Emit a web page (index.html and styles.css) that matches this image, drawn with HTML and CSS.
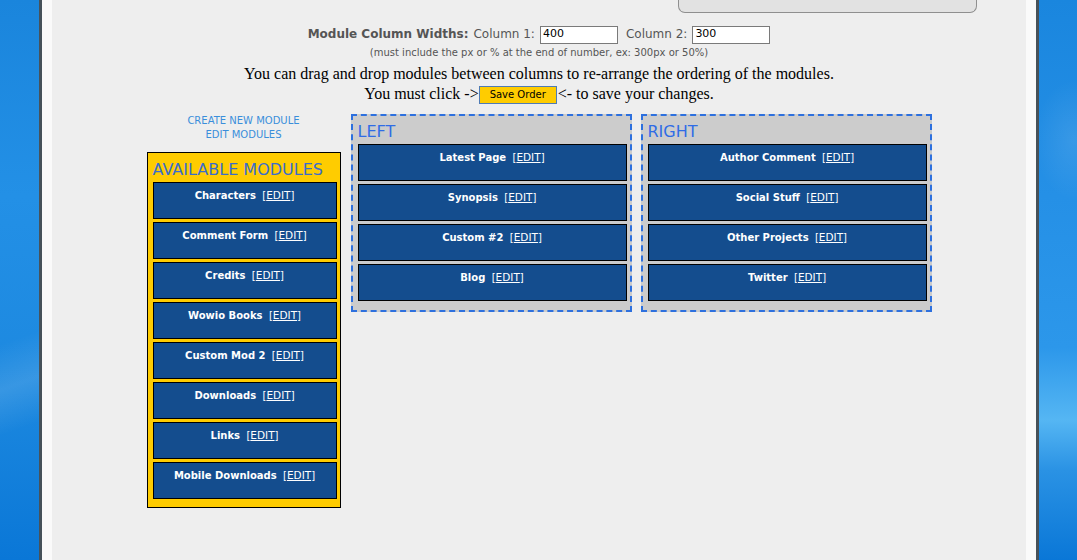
FILE: index.html
```html
<!DOCTYPE html>
<html>
<head>
<meta charset="utf-8">
<title>Modules</title>
<link rel="stylesheet" href="styles.css">
</head>
<body>
<div class="side side-left"></div>
<div class="page">
  <div class="content">
    <div class="topbar"><div class="topbox"></div></div>

    <form class="widths">
      <div class="widths-row">
        <b class="widths-label">Module Column Widths:</b>
        <span class="col-label">Column 1:</span>
        <input class="col-input" type="text" value="400">
        <span class="col-label col-label-2">Column 2:</span>
        <input class="col-input" type="text" value="300">
      </div>
      <div class="widths-hint">(must include the px or % at the end of number, ex: 300px or 50%)</div>
    </form>

    <p class="instructions">You can drag and drop modules between columns to re-arrange the ordering of the modules.<br>You must click -&gt;<button class="save-btn" type="button">Save Order</button>&lt;- to save your changes.</p>

    <div class="columns">
      <div class="avail-col">
        <div class="admin-links">
          <a class="admin-link">CREATE NEW MODULE</a>
          <a class="admin-link">EDIT MODULES</a>
        </div>
        <div class="avail-box">
          <div class="box-title">AVAILABLE MODULES</div>
          <div class="module"><b>Characters</b>&nbsp; [<a class="module-edit">EDIT</a>]</div>
          <div class="module"><b>Comment Form</b>&nbsp; [<a class="module-edit">EDIT</a>]</div>
          <div class="module"><b>Credits</b>&nbsp; [<a class="module-edit">EDIT</a>]</div>
          <div class="module"><b>Wowio Books</b>&nbsp; [<a class="module-edit">EDIT</a>]</div>
          <div class="module"><b>Custom Mod 2</b>&nbsp; [<a class="module-edit">EDIT</a>]</div>
          <div class="module"><b>Downloads</b>&nbsp; [<a class="module-edit">EDIT</a>]</div>
          <div class="module"><b>Links</b>&nbsp; [<a class="module-edit">EDIT</a>]</div>
          <div class="module"><b>Mobile Downloads</b>&nbsp; [<a class="module-edit">EDIT</a>]</div>
        </div>
      </div>

      <div class="drop-box drop-left">
        <div class="box-title drop-title">LEFT</div>
        <div class="module"><b>Latest Page</b>&nbsp; [<a class="module-edit">EDIT</a>]</div>
        <div class="module"><b>Synopsis</b>&nbsp; [<a class="module-edit">EDIT</a>]</div>
        <div class="module"><b>Custom #2</b>&nbsp; [<a class="module-edit">EDIT</a>]</div>
        <div class="module"><b>Blog</b>&nbsp; [<a class="module-edit">EDIT</a>]</div>
      </div>

      <div class="drop-box drop-right">
        <div class="box-title drop-title">RIGHT</div>
        <div class="module"><b>Author Comment</b>&nbsp; [<a class="module-edit">EDIT</a>]</div>
        <div class="module"><b>Social Stuff</b>&nbsp; [<a class="module-edit">EDIT</a>]</div>
        <div class="module"><b>Other Projects</b>&nbsp; [<a class="module-edit">EDIT</a>]</div>
        <div class="module"><b>Twitter</b>&nbsp; [<a class="module-edit">EDIT</a>]</div>
      </div>
    </div>
  </div>
</div>
<div class="side side-right"></div>
</body>
</html>
```

FILE: styles.css
```css
html, body {
  margin: 0;
  height: 100%;
}

body {
  display: flex;
  overflow: hidden;
  background: #0d7bd9;
  font-family: "DejaVu Sans", Verdana, sans-serif;
}

.side-left {
  flex: 0 0 39px;
  background:
    linear-gradient(160deg, rgba(255,255,255,0) 60%, rgba(255,255,255,0.12) 68%, rgba(255,255,255,0) 76%),
    linear-gradient(180deg, #1a85dc 0%, #2390e6 35%, #1c88df 70%, #0a77d7 100%);
}

.side-right {
  flex: 1 1 auto;
  background:
    radial-gradient(ellipse 40px 60px at 35px 140px, rgba(255,255,255,0.10), rgba(255,255,255,0) 100%),
    linear-gradient(180deg, #1a86de 0%, #2590e6 35%, #2c97ea 62%, #55b6f3 75%, #2a92e4 84%, #0a77d7 100%);
}

.page {
  flex: 0 0 1000px;
  box-sizing: border-box;
  border-left: 3px solid #47525a;
  border-right: 3px solid #47525a;
  padding: 0 10px;
  background: #fafafa;
}

.content {
  height: 100%;
  background: #eeeeee;
}

/* top rounded box (cut off by the viewport) */
.topbar {
  display: flex;
  justify-content: flex-end;
  padding-right: 49px;
}

.topbox {
  width: 297px;
  height: 12px;
  background: #e2e2e2;
  border: 1px solid #8f8f8f;
  border-top: none;
  border-radius: 0 0 7px 7px;
}

/* column widths form */
.widths {
  margin: 13px 0 0;
  color: #555555;
}

.widths-row {
  display: flex;
  justify-content: center;
  align-items: flex-start;
  font-size: 12px;
  line-height: 12px;
  padding-top: 2px;
  height: 16px;
}

.widths-label {
  margin-right: 5px;
}

.col-label {
  margin-right: 5px;
}

.col-label-2 {
  margin-left: 8px;
}

.col-input {
  box-sizing: border-box;
  width: 78px;
  height: 18px;
  margin: -2px 0 0;
  padding: 0 2px 4px;
  border: 1px solid #7a7a7a;
  border-radius: 0;
  background: #ffffff;
  color: #000000;
  font-family: "DejaVu Sans", Verdana, sans-serif;
  font-size: 11px;
  line-height: 12px;
}

.widths-hint {
  margin-top: 3px;
  text-align: center;
  font-size: 10px;
  line-height: 12px;
}

/* instructions */
.instructions {
  margin: 5px 0 0;
  text-align: center;
  font-family: "Liberation Serif", "Times New Roman", serif;
  font-size: 16px;
  line-height: 20px;
  color: #000000;
}

.save-btn {
  box-sizing: border-box;
  width: 78px;
  height: 18px;
  margin: 0 1px 0 0;
  padding: 0;
  vertical-align: 1px;
  background: #ffcc00;
  border: 1px solid #4f7bb5;
  border-radius: 0;
  color: #000000;
  font-family: "DejaVu Sans", Verdana, sans-serif;
  font-size: 10px;
  line-height: 16px;
}

/* module columns */
.columns {
  display: flex;
  justify-content: center;
  align-items: flex-start;
  margin-top: 10px;
}

.avail-col {
  width: 194px;
  margin-right: 10px;
}

.admin-links {
  display: flex;
  flex-direction: column;
  align-items: center;
  font-size: 10px;
  line-height: 14px;
}

.admin-link {
  color: #3a8edb;
  text-decoration: none;
}

.avail-box {
  box-sizing: border-box;
  margin-top: 10px;
  padding: 0 3px 5px 5px;
  background: #ffcc00;
  border: 1px solid #000000;
}

.box-title {
  padding-top: 7px;
  margin-bottom: 3px;
  font-size: 16px;
  line-height: 19px;
  color: #3a6ccc;
  white-space: nowrap;
}

.drop-box {
  box-sizing: border-box;
  padding: 0 3px 6px 5px;
  background: #cccccc;
  border: 2px dashed #2d70de;
}

.drop-left {
  width: 281px;
  margin-right: 9px;
}

.drop-right {
  width: 291px;
}

.drop-title {
  color: #2f6ce6;
  padding-top: 6px;
  margin-bottom: 3px;
}

.module {
  box-sizing: border-box;
  height: 37px;
  margin-bottom: 3px;
  padding-top: 6px;
  background: #144d8e;
  border: 1px solid #000000;
  color: #ffffff;
  text-align: center;
  font-size: 10px;
  line-height: 12px;
  white-space: nowrap;
}

.module-edit {
  color: #ffffff;
  text-decoration: underline;
  font-size: 10.5px;
}
```
